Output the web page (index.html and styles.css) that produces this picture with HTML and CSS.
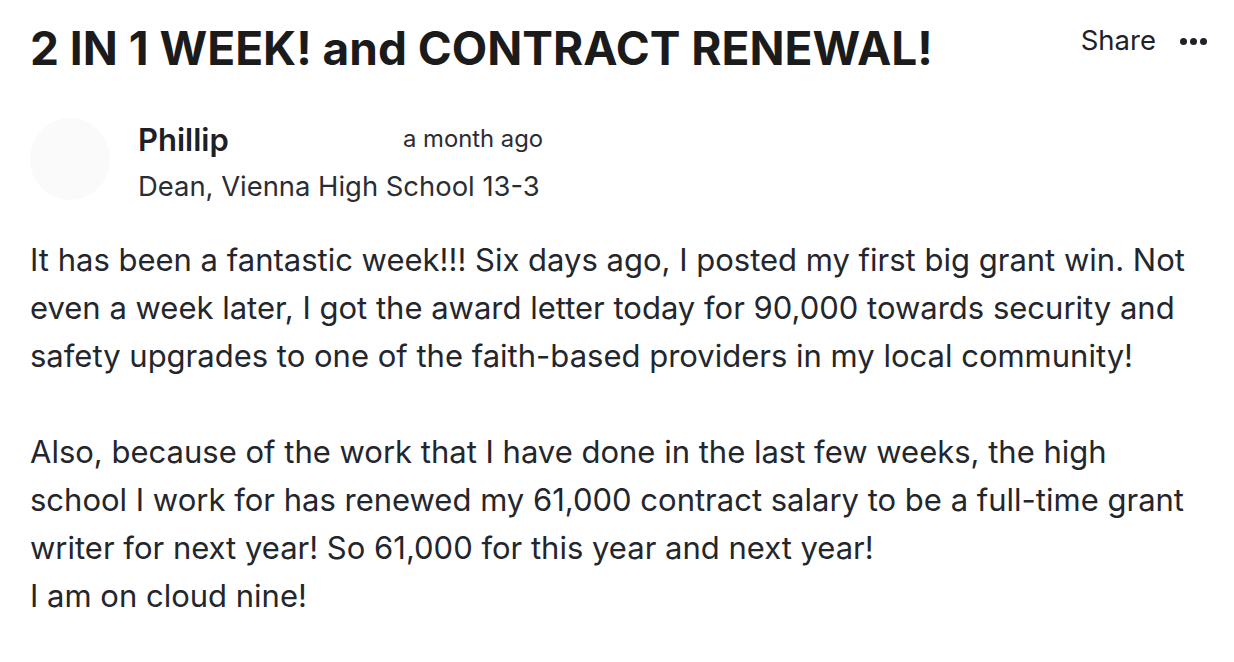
FILE: index.html
```html
<!DOCTYPE html>
<html>
<head>
<meta charset="utf-8">
<link rel="stylesheet" href="styles.css">
</head>
<body>
<div class="page">
  <header class="top">
    <h1 class="title">2 IN 1 WEEK! and CONTRACT RENEWAL!</h1>
    <div class="actions">
      <span class="share">Share</span>
      <span class="more"><i></i><i></i><i></i></span>
    </div>
  </header>
  <div class="author">
    <div class="avatar"></div>
    <div class="info">
      <div class="nameRow">
        <span class="name">Phillip</span>
        <span class="time">a month ago</span>
      </div>
      <div class="role">Dean, Vienna High School 13-3</div>
    </div>
  </div>
  <div class="post">
    <p>It has been a fantastic week!!! Six days ago, I posted my first big grant win. Not even a week later, I got the award letter today for 90,000 towards security and safety upgrades to one of the faith-based providers in my local community!</p>
    <p>Also, because of the work that I have done in the last few weeks, the high school I work for has renewed my 61,000 contract salary to be a full-time grant writer for next year! So 61,000 for this year and next year!<br>I am on cloud nine!</p>
  </div>
</div>
</body>
</html>
```

FILE: styles.css
```css
* { box-sizing: border-box; }
html, body { margin: 0; padding: 0; background: #fff; }
body { font-family: Inter, Roboto, sans-serif; color: #1f2228; }
.page { padding: 20px 0 0 30px; width: 1234px; }
.top { display: flex; justify-content: space-between; align-items: flex-start; padding-right: 27px; }
.title { margin: 0; font-size: 46px; font-weight: 700; line-height: 56px; color: #1b1b1b; letter-spacing: 0; }
.actions { display: flex; align-items: center; gap: 24px; padding-top: 4px; }
.share { font-size: 27.5px; line-height: 32px; color: #1f2228; }
.more { display: flex; gap: 3px; padding-top: 2px; }
.more i { display: block; width: 7px; height: 7px; border-radius: 50%; background: #1f2228; }
.author { display: flex; gap: 28px; margin-top: 42px; }
.avatar { width: 80px; height: 82px; border-radius: 50%; background: #fafafa; }
.info { padding-top: 3px; }
.nameRow { display: flex; align-items: center; }
.name { font-size: 31px; font-weight: 600; line-height: 38px; width: 265px; color: #1d2026; }
.time { font-size: 23.8px; color: #2a2d33; padding-bottom: 4px; }
.role { font-size: 27.4px; line-height: 36px; margin-top: 9px; color: #2a2d33; }
.post { margin-top: 32px; width: 1165px; font-size: 31px; line-height: 48px; color: #23262c; }
.post p { margin: 0 0 48px 0; }
```
